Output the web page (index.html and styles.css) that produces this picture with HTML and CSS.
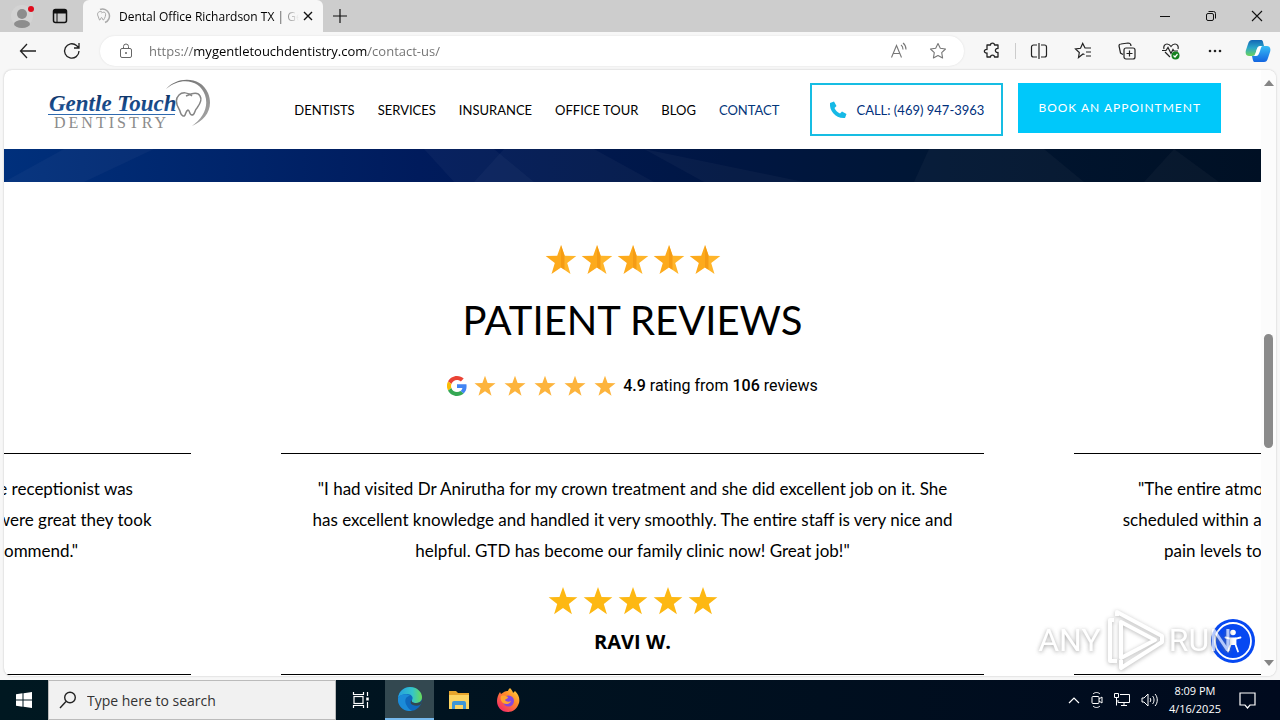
FILE: index.html
```html
<!DOCTYPE html>
<html lang="en">
<head>
  <meta charset="UTF-8" />
  <meta name="viewport" content="width=device-width, initial-scale=1.0"/>
  <title>Dental Office Richardson TX | Gentle Touch Dentistry</title>
  <link rel="stylesheet" href="styles.css">
</head>
<body>

<svg class="defs" width="0" height="0" aria-hidden="true">
  <symbol id="star" viewBox="0 0 32 32"><path d="M16 1l3.800 10.800 11.500.3-9.100 7 3.300 11L16 23.500 6.500 30.100l3.300-11-9.100-7 11.500-.3z"/></symbol>
  <symbol id="star-half" viewBox="0 0 32 32">
    <path fill="#ffb52a" d="M16 1l3.800 10.800 11.500.3-9.100 7 3.300 11L16 23.500z"/>
    <path fill="#fdaa1c" d="M16 1v22.500l-9.500 6.600 3.300-11-9.100-7 11.500-.3z"/>
    <path fill="#f59c14" d="M16 1l3.500 10.800v14L16 23.500z"/>
  </symbol>
</svg>

<div class="tabs">
  <button class="icon profile" aria-label="Profile">
    <svg width="24" height="26" viewBox="0 0 24 26"><circle cx="12" cy="13" r="11" fill="#d3d3d3"/><circle cx="12" cy="11" r="5" fill="#8d8d8d"/><ellipse cx="12" cy="21" rx="8" ry="4" fill="#8d8d8d"/><circle cx="21" cy="6" r="3" fill="#e00b1c"/></svg>
  </button>
  <button class="icon workspaces" aria-label="Tab actions">
    <svg width="16" height="16" viewBox="0 0 16 16" fill="none" stroke="#111" stroke-width="1.500"><rect x="1.500" y="1.500" width="13" height="13" rx="2"/><path d="M2 3.500h12" stroke-width="4"/><path d="M5 4v10" stroke-width="1"/></svg>
  </button>
  <div class="tab">
    <svg width="16" height="16" viewBox="0 0 16 16" fill="none" stroke="#aaa"><path d="M5 1.500a6.800 6.800 0 0 1 5 13" stroke-width="1.500"/><path d="M7 4C4 2.500 1.500 5 3 8l1.500 4c1 1 1-2.500 2-2.500s1 3 2 2.500C10 10 11 7 10.500 5.500 10 3.500 8 4 6.500 5"/></svg>
    <span class="tab-title">Dental Office Richardson TX | Gen</span>
    <button class="icon" aria-label="Close tab">
      <svg width="10" height="10" viewBox="0 0 10 10" stroke="#111" stroke-width="1.400"><path d="M1 1l8 8M9 1L1 9"/></svg>
    </button>
  </div>
  <button class="icon new-tab" aria-label="New tab">
    <svg width="14" height="14" viewBox="0 0 14 14" stroke="#111" stroke-width="1.200"><path d="M7 0v14M0 7h14"/></svg>
  </button>
  <div class="window-buttons">
    <button class="icon" aria-label="Minimize"><svg width="12" height="12" viewBox="0 0 12 12" stroke="#111"><path d="M1 6.500h10"/></svg></button>
    <button class="icon" aria-label="Restore"><svg width="12" height="12" viewBox="0 0 12 12" fill="none" stroke="#111"><rect x="1.500" y="3.500" width="7" height="7" rx="1.500"/><path d="M3.500 1.500h5a2 2 0 0 1 2 2v5"/></svg></button>
    <button class="icon" aria-label="Close"><svg width="12" height="12" viewBox="0 0 12 12" stroke="#111" stroke-width="1.100"><path d="M1 1l10 10M11 1L1 11"/></svg></button>
  </div>
</div>

<div class="toolbar">
  <button class="icon" aria-label="Back"><svg width="18" height="16" viewBox="0 0 18 16" fill="none" stroke="#222" stroke-width="1.300"><path d="M17 8H1.500M8 1L1.500 8 8 15"/></svg></button>
  <button class="icon reload" aria-label="Refresh"><svg width="18" height="18" viewBox="0 0 18 18" fill="none" stroke="#222" stroke-width="1.300"><path d="M16 9a7.200 7.200 0 1 1-2.500-5.500L15.500 5.500M16 1v5h-5"/></svg></button>
  <div class="address">
    <svg width="14" height="16" viewBox="0 0 14 16" fill="none" stroke="#666"><rect x="1.500" y="5.500" width="11" height="9" rx="1.500"/><path d="M4.500 5V3.500a2.500 2.500 0 0 1 5 0V5"/><circle cx="7" cy="10" r=".6" fill="#666"/></svg>
    <input class="url" type="text" value="https://mygentletouchdentistry.com/contact-us/" aria-label="Address">
    <button class="icon" aria-label="Read aloud"><svg width="18" height="18" viewBox="0 0 18 18" fill="none" stroke="#777" stroke-width="1.100"><path d="M1.500 15.500l5-12 5 12M3.500 11.500h6M11 3c1.500 1 2 2.500 2 4.500M13 1c2 1.500 3 3.500 3 6.500"/></svg></button>
    <button class="icon" aria-label="Add to favorites"><svg width="18" height="18" viewBox="0 0 18 18" fill="none" stroke="#777" stroke-width="1.100" stroke-linejoin="round"><path d="M9 1.500l2.300 4.800 5.200.7-3.800 3.700.9 5.300L9 13.500 4.400 16l.9-5.300L1.500 7l5.200-.7z"/></svg></button>
  </div>
  <div class="actions">
    <button class="icon" aria-label="Extensions"><svg width="18" height="18" viewBox="0 0 18 18" fill="none" stroke="#222" stroke-width="1.300" stroke-linejoin="round"><path d="M4 3h3.500c0-2.500 4-2.500 4 0H15v3.500c-3.500-.5-3.500 4.500 0 4v4.500h-3.500c0-2.500-4-2.500-4 0H4v-4C.5 11.500.5 7 4 7.500z"/></svg></button>
    <span class="divider"></span>
    <button class="icon" aria-label="Split screen"><svg width="18" height="18" viewBox="0 0 18 18" fill="none" stroke="#222" stroke-width="1.200"><path d="M7 3H3.500A2 2 0 0 0 1.500 5v8a2 2 0 0 0 2 2H7M11 3h3.500a2 2 0 0 1 2 2v8a2 2 0 0 1-2 2H11M9 1v16"/></svg></button>
    <button class="icon" aria-label="Favorites"><svg width="18" height="18" viewBox="0 0 18 18" fill="none" stroke="#222" stroke-width="1.200"><path d="M10.500 12.500L9 12l-4.500 3.500.8-5L1.500 7l5-.7 2.200-4.800L11 6h6M12 10h5M12 14h5"/></svg></button>
    <button class="icon" aria-label="Collections"><svg width="18" height="18" viewBox="0 0 18 18" fill="none" stroke="#222" stroke-width="1.200"><rect x="6" y="6" width="11" height="11" rx="2"/><path d="M11.500 8.500v6M8.500 11.500h6M5 12.500L2.500 11 1 4c0-1.500 1-2 2-2l7-1c2 0 3 1 3 3"/></svg></button>
    <button class="icon" aria-label="Browser essentials"><svg width="18" height="18" viewBox="0 0 18 18" fill="none" stroke="#222" stroke-width="1.200"><path d="M8 15L3 10M2 7C1 4 3 2 5 2c2 0 3 1 4 2.500C10 3 11 2 13 2c2 0 4 2 3 5M0 8.500h4l2-3 3 6 2-4 1 1.500h4"/><circle cx="13.500" cy="13.500" r="4" fill="#16811f" stroke="none"/><path d="M11.500 13.500l1.500 1.500 2.500-3" stroke="#fff"/></svg></button>
    <button class="icon" aria-label="Settings and more"><svg width="18" height="18" viewBox="0 0 18 18" fill="#222"><circle cx="4" cy="9" r="1.300"/><circle cx="9" cy="9" r="1.300"/><circle cx="14" cy="9" r="1.300"/></svg></button>
    <button class="icon" aria-label="Copilot">
      <svg width="26" height="24" viewBox="0 0 26 24">
        <defs>
          <linearGradient id="cp1" x1="0" y1="0" x2="0" y2="1"><stop offset="0" stop-color="#1267b5"/><stop offset=".5" stop-color="#2ca7c9"/><stop offset="1" stop-color="#6cd45a"/></linearGradient>
          <linearGradient id="cp2" x1="0" y1="0" x2="0" y2="1"><stop offset="0" stop-color="#37bdf5"/><stop offset="1" stop-color="#1264e0"/></linearGradient>
        </defs>
        <path fill="url(#cp1)" d="M7 1h9c2 0 2 2 3 6h-4c-2 0-3 2-4 6-1 3-2 4-4 4H4c-3 0-4-3-3-6l2-6c1-3 2-4 4-4z"/>
        <path fill="url(#cp2)" d="M19 23h-9c-2 0-2-2-3-6 3 0 4-1 5-4 1-4 2-6 4-6h6c3 0 4 3 3 6l-2 6c-1 3-2 4-4 4z"/>
        <path fill="#fff" d="M15 7c-2 0-3 2-4 6-.5 2-1.500 4-2.500 4H11c2 0 3-2 4-5s1-5 3-5z"/>
      </svg>
    </button>
  </div>
</div>

<div class="viewport">
  <div class="page">
    <header class="site-header">
      <a class="logo" href="#" aria-label="Gentle Touch Dentistry">
        <svg width="164" height="52" viewBox="0 0 164 52">
          <defs><linearGradient id="ink" x1="0" y1="0" x2="0" y2="1"><stop offset="0" stop-color="#092c5c"/><stop offset="1" stop-color="#2462ad"/></linearGradient>
          <linearGradient id="steel" x1="0" y1="0" x2="1" y2="1"><stop offset="0" stop-color="#666"/><stop offset="1" stop-color="#aaa"/></linearGradient></defs>
          <text class="logo-name" x="1" y="32" fill="url(#ink)">Gentle Touch</text>
          <path d="M0 35.500h127" stroke="#2e69af"/>
          <text class="logo-sub" x="6" y="49">DENTISTRY</text>
          <path fill="url(#steel)" d="M118 10C129-3 153-3 160 14c6 15-2 27-16 33 11-8 17-19 13-31-5-15-24-19-39-6z"/>
          <path fill="none" stroke="#858585" stroke-width="1.500" d="M144 17c-4-4-10-4-13-1-4 4-3 9 0 14 2 3 1 6 4 7 3 1 2-5 5-6 2 0 1 5 4 5 3 0 2-4 5-7 3-4 5-9 3-12-2-4-6-3-9-2l-5 2"/>
        </svg>
      </a>
      <nav class="menu">
        <a href="#">DENTISTS</a>
        <a href="#">SERVICES</a>
        <a href="#">INSURANCE</a>
        <a href="#">OFFICE TOUR</a>
        <a href="#">BLOG</a>
        <a href="#" class="active">CONTACT</a>
      </nav>
      <a class="call" href="tel:4699473963">
        <svg width="18" height="18" viewBox="0 0 18 18" fill="#16b9e6"><path d="M1 2l4-1.500 2.500 4.500-2 2c1 2.500 3 4.500 5.500 5.500l2-2L17.500 13 16 17C7 18 0 10 1 2z"/></svg>
        CALL: (469) 947-3963
      </a>
      <a class="book" href="#">BOOK AN APPOINTMENT</a>
    </header>

    <div class="banner">
      <svg width="100%" height="33" viewBox="0 0 1257 33" preserveAspectRatio="none">
        <g fill="#fff" fill-opacity=".03"><path d="M60 0h90L80 33H0z"/><path d="M420 0l30 33h80L490 0z"/><path d="M500 0l-30 33h180L590 0z"/><path d="M640 0l160 33H700z"/><path d="M925 0l-15 33h170L1040 0z"/><path d="M1170 0l-30 33h75z"/></g>
      </svg>
    </div>

    <section class="reviews">
      <div class="stars stars-top" role="img" aria-label="5 stars">
        <svg><use href="#star-half"/></svg><svg><use href="#star-half"/></svg><svg><use href="#star-half"/></svg><svg><use href="#star-half"/></svg><svg><use href="#star-half"/></svg>
      </div>
      <h1>PATIENT REVIEWS</h1>
      <div class="rating">
        <svg class="google" viewBox="0 0 48 48" aria-label="Google"><path fill="#ea4335" d="M24 9.500c3.500 0 6.700 1.200 9.200 3.600l6.900-6.900C35.900 2.400 30.500 0 24 0 14.600 0 6.500 5.400 2.600 13.200l8 6.200C12.400 13.700 17.700 9.500 24 9.500z"/><path fill="#4285f4" d="M47 24.600c0-1.600-.2-3.100-.4-4.600H24v9h12.900c-.6 3-2.200 5.500-4.700 7.200l7.700 6C44.400 38 47 31.800 47 24.600z"/><path fill="#fbbc05" d="M10.500 28.600a14.500 14.500 0 0 1 0-9.200l-8-6.200a24 24 0 0 0 0 21.600z"/><path fill="#34a853" d="M24 48c6.500 0 11.900-2.100 15.900-5.800l-7.700-6c-2.200 1.500-4.900 2.300-8.200 2.300-6.300 0-11.600-4.200-13.500-9.900l-8 6.200C6.500 42.600 14.600 48 24 48z"/></svg>
        <div class="stars stars-google" role="img" aria-label="4.9 out of 5">
          <svg><use href="#star"/></svg><svg><use href="#star"/></svg><svg><use href="#star"/></svg><svg><use href="#star"/></svg><svg><use href="#star"/></svg>
        </div>
        <p><b>4.9</b> rating from <b>106</b> reviews</p>
      </div>

      <div class="slider">
        <article class="slide">
          <p>"Wonderful visit today. The doctor was great with kids and the receptionist was<br>very kind to both me and my family. All of the doctors and staff were great they took<br>care of everything in one single visit. I would highly recommend."</p>
        </article>
        <article class="slide">
          <p>"I had visited Dr Anirutha for my crown treatment and she did excellent job on it. She<br>has excellent knowledge and handled it very smoothly. The entire staff is very nice and<br>helpful. GTD has become our family clinic now! Great job!"</p>
          <div class="stars stars-slide" role="img" aria-label="5 stars">
            <svg><use href="#star"/></svg><svg><use href="#star"/></svg><svg><use href="#star"/></svg><svg><use href="#star"/></svg><svg><use href="#star"/></svg>
          </div>
          <h2>RAVI W.</h2>
        </article>
        <article class="slide">
          <p>"The entire atmosphere was calm and friendly from the start. I was able to get<br>scheduled within a day of calling the office and the team kept asking me about my<br>pain levels to be sure that I was comfortable during the full procedure."</p>
        </article>
      </div>
    </section>
  </div>

  <div class="scrollbar" aria-hidden="true">
    <svg width="10" height="6" viewBox="0 0 10 6"><path d="M5 0l5 6H0z" fill="#858585"/></svg>
    <div class="track"><div class="thumb"></div></div>
    <svg width="10" height="6" viewBox="0 0 10 6"><path d="M0 0h10L5 6z" fill="#858585"/></svg>
  </div>

  <button class="accessibility" aria-label="Accessibility">
    <svg width="44" height="44" viewBox="0 0 44 44"><circle cx="22" cy="22" r="22" fill="#0648f2"/><circle cx="22" cy="22" r="18" fill="none" stroke="#fff" stroke-width="1.800"/><circle cx="22" cy="13.500" r="2.800" fill="#fff"/><path d="M14.500 18.500l5.500 1.300h4l5.500-1.300" fill="none" stroke="#fff" stroke-width="1.800" stroke-linecap="round"/><path d="M19.500 19.500h5v6l2.500 7M19.500 19.500v6l-2.500 7" fill="none" stroke="#fff" stroke-width="1.800" stroke-linecap="round"/><path d="M19.500 19.500h5v6.500h-5z" fill="#fff"/></svg>
  </button>

  <div class="watermark">
    <span>ANY</span>
    <svg width="60" height="64" viewBox="0 0 60 64" fill="none" stroke="#fff" stroke-width="4" stroke-linejoin="round"><path d="M16 14v36L50 32z"/><path d="M12 53H5V12h4M12 8V4l45 24v6L16 60V52"/></svg>
    <span>RUN</span>
  </div>
</div>

<div class="taskbar">
  <button class="icon start" aria-label="Start"><svg width="16" height="16" viewBox="0 0 16 16" fill="#fff"><path d="M0 2.200L6.500 1.300v6.200H0zM7.500 1.200L16 0v7.500H7.500zM0 8.500h6.500v6.200L0 13.800zM7.500 8.500H16V16l-8.500-1.200z"/></svg></button>
  <label class="search">
    <svg width="18" height="18" viewBox="0 0 18 18" fill="none" stroke="#222" stroke-width="1.400"><circle cx="11" cy="6.500" r="5.300"/><path d="M7 10.500L1 17"/></svg>
    <input type="text" placeholder="Type here to search" aria-label="Type here to search">
  </label>
  <div class="apps">
    <button class="icon" aria-label="Task View"><svg width="18" height="18" viewBox="0 0 18 18" fill="none" stroke="#fff" stroke-width="1.200"><path d="M1.500 1v2.500h10V1M1.500 17v-2.500h10V17M15.500 1v4M15.500 11v6"/><rect x="2" y="5.500" width="9" height="7"/><path d="M15.500 6.500v3" stroke-width="2.500"/></svg></button>
    <button class="icon current" aria-label="Microsoft Edge">
      <svg width="24" height="24" viewBox="0 0 24 24">
        <defs><linearGradient id="ed1" x1="0" y1="0" x2="1" y2="0"><stop offset="0" stop-color="#249fdf"/><stop offset=".6" stop-color="#35c5c9"/><stop offset="1" stop-color="#69dc57"/></linearGradient></defs>
        <circle cx="12" cy="12" r="12" fill="#0f69bd"/>
        <path fill="url(#ed1)" d="M0 11C1 4 6 0 12 0c7 0 12 5 12 10 0 4-3 6-6 6s-5-1-4-3c2-3-1-6-5-6-4 0-8 2-9 4z"/>
        <path fill="#1b8bd8" d="M0 11c2-4 9-5 12-2-5 0-6 6-3 10 1 2 3 4 5 5C6 25-1 19 0 11z"/>
        <path fill="#334850" d="M14 13c-1 2 1 3 4 3 3 0 5-1 6-3 0 2-1 4-2 5-2 1-5 1-7 0-3-1-3-4-1-5z"/>
      </svg>
    </button>
    <button class="icon" aria-label="File Explorer"><svg width="22" height="20" viewBox="0 0 22 20"><path fill="#e7a52c" d="M1 1h7l2 2h11v4H1z"/><path fill="#fcd462" d="M1 5h20v14H1z"/><path fill="#3e96d5" d="M4 19v-6a2 2 0 0 1 2-2h10a2 2 0 0 1 2 2v6h-3v-4H7v4z"/></svg></button>
    <button class="icon" aria-label="Firefox">
      <svg width="24" height="24" viewBox="0 0 24 24">
        <defs><linearGradient id="ff" x1="1" y1="0" x2=".2" y2="1"><stop offset="0" stop-color="#ffe23f"/><stop offset=".45" stop-color="#ff8a2a"/><stop offset="1" stop-color="#f5266a"/></linearGradient></defs>
        <path fill="url(#ff)" d="M14 0c2 2 3 4 3 5l2-2c4 4 5 8 4 12-2 6-6 9-11 9C5 24 1 19 1 13c0-3 1-6 3-9l1 2 3-2c1-1 3-1 4-1 0-1 1-2 2-3z"/>
        <circle cx="12.500" cy="13" r="5.500" fill="#8447de"/>
        <path fill="#ffa52d" d="M5 8c3-1 5 0 7 1 0 2-3 2-3 3 1 2 4 2 6 1-1 3-5 4-8 2-2-2-3-4-2-7z"/>
      </svg>
    </button>
  </div>
  <div class="tray">
    <button class="icon" aria-label="Show hidden icons"><svg width="12" height="8" viewBox="0 0 12 8" fill="none" stroke="#fff" stroke-width="1.200"><path d="M1 7l5-5 5 5"/></svg></button>
    <button class="icon" aria-label="Meet Now"><svg width="12" height="18" viewBox="0 0 12 18" fill="none" stroke="#fff"><rect x="1" y="5.500" width="7" height="7" rx="1"/><path d="M8 8l3-2v6l-3-2M2 3c2-2 5-2 7 0M2 15c2 2 5 2 7 0"/></svg></button>
    <button class="icon" aria-label="Network"><svg width="16" height="16" viewBox="0 0 16 16" fill="none" stroke="#fff"><path d="M6 2.500h9.500v8H4V8M7 13.500h6M10 10v3.500M.5 1.500h4v4h-4zM2.500 5.500v8"/></svg></button>
    <button class="icon" aria-label="Volume"><svg width="17" height="14" viewBox="0 0 17 14" fill="none" stroke="#fff"><path d="M1 5h2l4-4v12L3 9H1zM9 5c1 1 1 3 0 4M11.500 3c2 2 2 6 0 8M14 1c3 3 3 9 0 12"/></svg></button>
    <div class="clock"><time>8:09 PM</time><time>4/16/2025</time></div>
    <button class="icon" aria-label="Notifications"><svg width="17" height="17" viewBox="0 0 17 17" fill="none" stroke="#fff" stroke-width="1.200"><path d="M1 1h15v12h-5l-2.500 3L6 13H1z"/></svg></button>
  </div>
</div>

</body>
</html>
```
FILE: styles.css
```css
* {
  box-sizing: border-box;
}
body {
  margin: 0;
  height: 100vh;
  display: flex;
  flex-direction: column;
  overflow: hidden;
  background: #f7f7f7;
  font-family: "Open Sans", "Noto Sans", sans-serif;
  color: #000;
}
.defs {
  position: absolute;
}
svg {
  display: block;
  flex: none;
}
a {
  color: inherit;
  text-decoration: none;
}
button {
  font: inherit;
  cursor: pointer;
}
.icon {
  display: flex;
  align-items: center;
  justify-content: center;
  padding: 0;
  border: none;
  background: none;
}

/* tab strip */
.tabs {
  display: flex;
  align-items: center;
  height: 32px;
  background: #cdcdcd;
}
.profile {
  margin-left: 10px;
}
.workspaces {
  margin-left: 18px;
}
.tab {
  display: flex;
  align-items: center;
  width: 240px;
  height: 32px;
  margin-left: 15px;
  padding: 0 10px 0 12px;
  background: #f7f7f7;
  border-radius: 6px 6px 0 0;
}
.tab-title {
  flex: 1;
  margin: 0 4px 0 8px;
  font-size: 12px;
  white-space: nowrap;
  overflow: hidden;
  -webkit-mask-image: linear-gradient(90deg, #000 85%, transparent);
  mask-image: linear-gradient(90deg, #000 85%, transparent);
}
.new-tab {
  margin-left: 10px;
}
.window-buttons {
  display: flex;
  margin-left: auto;
}
.window-buttons .icon {
  width: 46px;
  height: 32px;
}

/* toolbar */
.toolbar {
  display: flex;
  align-items: center;
  height: 38px;
  padding: 0 9px 0 19px;
}
.reload {
  margin-left: 26px;
}
.address {
  flex: 1;
  display: flex;
  align-items: center;
  gap: 21px;
  height: 30px;
  margin-left: 19px;
  padding: 0 17px 0 19px;
  background: #fff;
  border-radius: 15px;
  box-shadow: 0 0 2px #ddd;
}
.url {
  flex: 1;
  min-width: 0;
  margin-left: -5px;
  padding: 0;
  border: none;
  outline: none;
  font-family: inherit;
  font-size: 13px;
  color: transparent;
  background: linear-gradient(90deg, #707070 44px, #000 44px, #000 219px, #707070 219px);
  -webkit-background-clip: text;
  background-clip: text;
}
.actions {
  display: flex;
  align-items: center;
  gap: 26px;
  margin-left: 19px;
}
.actions .icon:first-child {
  margin-right: -12px;
}
.divider {
  width: 1px;
  height: 16px;
  margin-right: -12px;
  background: #ccc;
}
.actions .icon:last-child {
  margin-left: -5px;
}

/* page frame */
.viewport {
  position: relative;
  flex: 1;
  min-height: 0;
  display: flex;
  margin: 0 4px 4px;
  overflow: hidden;
  background: #fff;
  border-radius: 8px;
  box-shadow: 0 0 2px #bbb;
}
.page {
  flex: 1;
  min-width: 0;
  overflow: hidden;
}
.scrollbar {
  display: flex;
  flex-direction: column;
  align-items: center;
  width: 15px;
  padding: 10px 0;
  background: #fcfcfc;
}
.track {
  flex: 1;
  display: flex;
  flex-direction: column;
  justify-content: center;
}
.thumb {
  width: 9px;
  height: 20%;
  margin-top: 36px;
  background: #8a8a8a;
  border-radius: 5px;
}

/* site header */
.site-header {
  display: flex;
  align-items: flex-start;
  height: 79px;
  padding: 0 40px 0 44px;
  font-family: Lato, sans-serif;
}
.logo {
  margin-top: 9px;
}
.logo-name {
  font: italic bold 23px "Liberation Serif", serif;
}
.logo-sub {
  font: 16px "Liberation Serif", serif;
  letter-spacing: 3px;
  fill: #8b8b8b;
}
.menu {
  display: flex;
  gap: 23px;
  margin: 30px 31px 0 auto;
  font-size: 13px;
  line-height: 20px;
}
.menu .active {
  color: #03367a;
}
.call {
  display: flex;
  align-items: center;
  gap: 9px;
  height: 53px;
  margin-top: 13px;
  padding: 0 17px;
  border: 2px solid #16bde3;
  color: #00307c;
  font-size: 13px;
}
.book {
  height: 50px;
  margin: 13px 0 0 15px;
  padding: 0 20px;
  background: #00c8fa;
  color: #fff;
  font-size: 12px;
  line-height: 50px;
  letter-spacing: 1px;
}
.banner {
  height: 33px;
  background: linear-gradient(90deg, #00307c, #001b5c 33%, #001642 58%, #001633 75%, #001024);
}

/* reviews */
.reviews {
  padding-top: 62px;
  text-align: center;
}
.stars {
  display: flex;
  justify-content: center;
}
.stars-top {
  gap: 4px;
}
.stars-top svg {
  width: 32px;
  height: 32px;
}
h1 {
  margin: 16px 0 0;
  font: 40px/56px Lato, sans-serif;
}
.rating {
  display: flex;
  align-items: center;
  justify-content: center;
  gap: 7px;
  margin-top: 25px;
  font: 16px/26px Roboto, sans-serif;
}
.rating p {
  margin: 0;
}
.rating b {
  font-weight: 500;
}
.google {
  width: 20px;
  height: 20px;
}
.stars-google {
  gap: 8px;
  fill: #fdb43d;
}
.stars-google svg {
  width: 22px;
  height: 22px;
}
.slider {
  display: flex;
  justify-content: center;
  gap: 90px;
  margin-top: 54px;
}
.slide {
  flex: 0 0 56%;
  padding: 19px 0 17px;
  border-top: 1px solid #000;
  border-bottom: 1px solid #000;
  white-space: nowrap;
}
.slide p {
  margin: 0;
  font: 17px/31px Lato, sans-serif;
}
.stars-slide {
  gap: 5px;
  margin-top: 20px;
  fill: #fdb813;
}
.stars-slide svg {
  width: 30px;
  height: 30px;
}
.slide h2 {
  margin: 11px 0 0;
  font: bold 20px/30px "Open Sans", sans-serif;
}

/* floating over the page */
.accessibility {
  position: absolute;
  right: 21px;
  bottom: 13px;
  padding: 0;
  border: none;
  border-radius: 50%;
  background: none;
}
.watermark {
  position: absolute;
  right: 44px;
  bottom: 4px;
  display: flex;
  align-items: center;
  gap: 4px;
  opacity: .7;
  color: #fff;
  font: 32px/64px Roboto, sans-serif;
  text-shadow: 0 1px 4px #777;
  pointer-events: none;
}
.watermark svg {
  filter: drop-shadow(0 1px 2px #999);
}

/* taskbar */
.taskbar {
  display: flex;
  align-items: stretch;
  height: 40px;
  background: linear-gradient(90deg, #001821, #000a1e);
  color: #fff;
}
.start {
  width: 48px;
}
.search {
  display: flex;
  align-items: center;
  gap: 10px;
  width: 288px;
  padding: 0 10px;
  background: #f1f1f1;
  border: 1px solid #bbb;
}
.search input {
  flex: 1;
  min-width: 0;
  padding: 0;
  border: none;
  outline: none;
  background: none;
  font-family: inherit;
  font-size: 14px;
}
.search input::placeholder {
  color: #333;
}
.apps {
  display: flex;
}
.apps .icon {
  width: 49px;
}
.apps .current {
  background: #334850;
  border-bottom: 2px solid #76b9ed;
}
.tray {
  display: flex;
  align-items: center;
  gap: 11px;
  margin-left: auto;
  padding-right: 24px;
}
.clock {
  display: flex;
  flex-direction: column;
  align-items: center;
  font-size: 11px;
  line-height: 18px;
}
.clock + .icon {
  margin-left: 7px;
}
```
